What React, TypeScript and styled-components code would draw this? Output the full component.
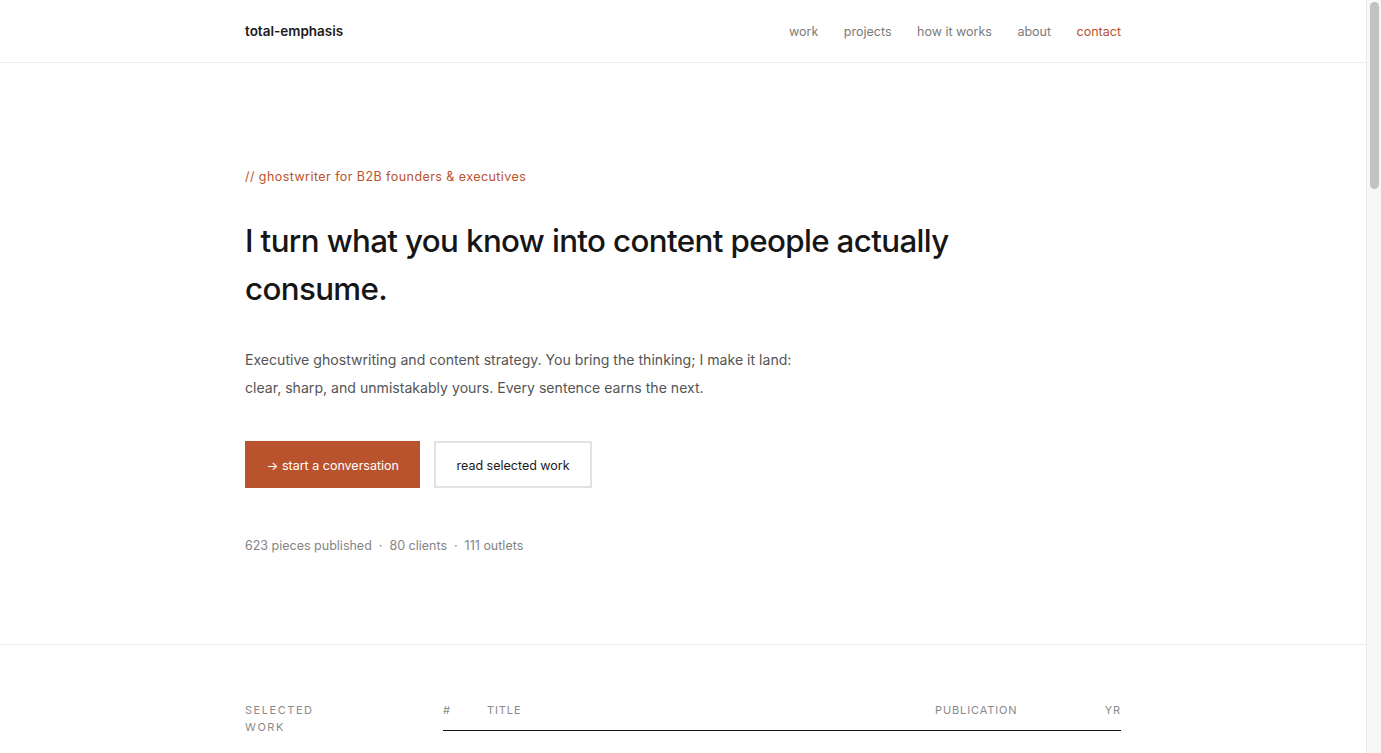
import styled, { createGlobalStyle } from 'styled-components'

const accent = '#b9532d'

const GlobalStyle = createGlobalStyle`
  * { box-sizing: border-box; }
  html, body { margin: 0; padding: 0; background: #fff; }
  body {
    margin-right: 15px;
    font-family: Inter, "Noto Sans", "Liberation Sans", sans-serif;
    color: #1a1a1a;
    -webkit-font-smoothing: antialiased;
  }
  a { color: inherit; text-decoration: none; }
`

// the browser's scrollbar as seen in the screenshot
const ScrollRail = styled.div`
  position: fixed;
  top: 0;
  right: 0;
  bottom: 0;
  width: 15px;
  background: #f7f7f7;
  border-left: 1px solid #ebebeb;
`

const ScrollThumb = styled.div`
  margin: 2px 0 0 3px;
  width: 9px;
  height: 187px;
  border-radius: 5px;
  background: #c2c2c2;
`

const Container = styled.div`
  width: 876px;
  margin: 0 auto;
`

const Header = styled.header`
  border-bottom: 1px solid #ececec;
`

const HeaderInner = styled(Container)`
  height: 62px;
  display: flex;
  align-items: center;
  justify-content: space-between;
`

const Logo = styled.a`
  font-size: 13.5px;
  font-weight: 600;
  color: #1a1a1a;
`

const Nav = styled.nav`
  display: flex;
  gap: 25.5px;
`

const NavLink = styled.a<{ $active?: boolean }>`
  font-size: 12.5px;
  color: ${p => (p.$active ? accent : '#7a7a7a')};
`

const Hero = styled.section`
  padding: 104px 0 88px;
  border-bottom: 1px solid #ececec;
`

const Eyebrow = styled.p`
  margin: 0 0 30px;
  font-size: 12.5px;
  line-height: 20px;
  letter-spacing: 0.035em;
  color: ${accent};
`

const Headline = styled.h1`
  margin: 0;
  max-width: 730px;
  font-size: 31.3px;
  line-height: 48px;
  font-weight: 500;
  letter-spacing: -0.02em;
  color: #161616;
`

const Lead = styled.p`
  margin: 33px 0 0;
  max-width: 560px;
  font-size: 14.1px;
  line-height: 28px;
  color: #555;
`

const Actions = styled.div`
  display: flex;
  gap: 14px;
  margin-top: 39px;
`

const Button = styled.a<{ $primary?: boolean }>`
  display: inline-flex;
  align-items: center;
  justify-content: center;
  height: 47px;
  padding: ${p => (p.$primary ? '1px 21.5px 0' : '1px 20px 0')};
  font-size: 12.5px;
  background: ${p => (p.$primary ? accent : '#fff')};
  color: ${p => (p.$primary ? '#fff' : '#1a1a1a')};
  border: ${p => (p.$primary ? 'none' : '2px solid #e2e2e2')};
`

const Stats = styled.p`
  margin: 48px 0 0;
  font-size: 12.5px;
  line-height: 20px;
  color: #858585;
`

const Dot = styled.span`
  margin: 0 7px;
`

const WorkSection = styled.section`
  padding: 57px 0 20px;
`

const WorkGrid = styled(Container)`
  display: grid;
  grid-template-columns: 198px 1fr;
`

const SectionLabel = styled.h2`
  margin: 0;
  width: 90px;
  font-size: 11px;
  line-height: 17px;
  font-weight: 400;
  letter-spacing: 0.14em;
  text-transform: uppercase;
  color: #8a8a8a;
`

const Table = styled.div`
  display: flex;
  flex-direction: column;
`

const HeadRow = styled.div`
  display: grid;
  grid-template-columns: 44px 1fr 150px 36px;
  align-items: baseline;
  padding: 1px 0 13px;
  border-bottom: 1px solid #161616;
  font-size: 11px;
  letter-spacing: 0.08em;
  color: #8a8a8a;
`

const Cell = styled.span<{ $right?: boolean }>`
  text-align: ${p => (p.$right ? 'right' : 'left')};
`

export default function App() {
  return (
    <>
      <GlobalStyle />
      <Header>
        <HeaderInner>
          <Logo href="#">total-emphasis</Logo>
          <Nav>
            <NavLink href="#">work</NavLink>
            <NavLink href="#">projects</NavLink>
            <NavLink href="#">how it works</NavLink>
            <NavLink href="#">about</NavLink>
            <NavLink href="#" $active>contact</NavLink>
          </Nav>
        </HeaderInner>
      </Header>

      <Hero>
        <Container>
          <Eyebrow>// ghostwriter for B2B founders &amp; executives</Eyebrow>
          <Headline>I turn what you know into content people actually consume.</Headline>
          <Lead>
            Executive ghostwriting and content strategy. You bring the thinking; I make it land:
            clear, sharp, and unmistakably yours. Every sentence earns the next.
          </Lead>
          <Actions>
            <Button href="#" $primary>→ start a conversation</Button>
            <Button href="#">read selected work</Button>
          </Actions>
          <Stats>
            623 pieces published<Dot>·</Dot>80 clients<Dot>·</Dot>111 outlets
          </Stats>
        </Container>
      </Hero>

      <WorkSection>
        <WorkGrid>
          <SectionLabel>Selected work</SectionLabel>
          <Table>
            <HeadRow>
              <Cell>#</Cell>
              <Cell>TITLE</Cell>
              <Cell>PUBLICATION</Cell>
              <Cell $right>YR</Cell>
            </HeadRow>
          </Table>
        </WorkGrid>
      </WorkSection>

      <ScrollRail>
        <ScrollThumb />
      </ScrollRail>
    </>
  )
}
